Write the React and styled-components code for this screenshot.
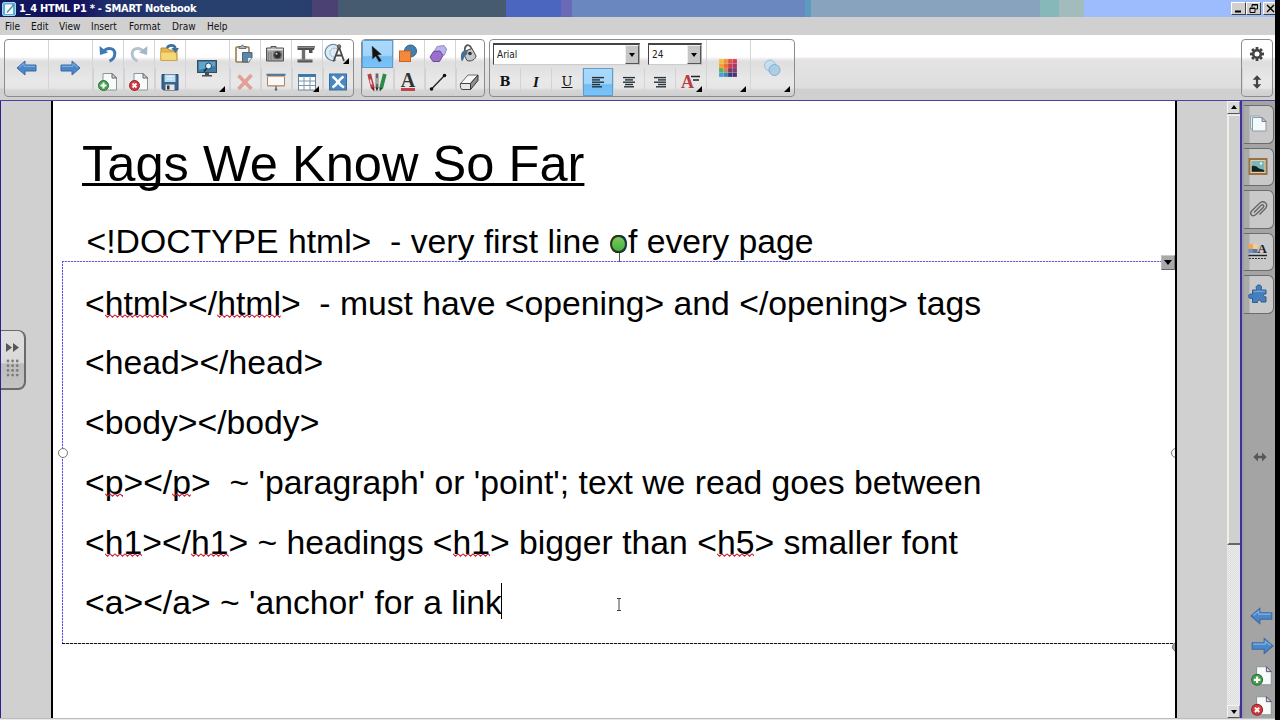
import React from "react";
import styled, { createGlobalStyle, css } from "styled-components";

const GlobalStyle = createGlobalStyle`
  * { box-sizing: border-box; }
  html, body { margin: 0; padding: 0; }
  body { width: 1280px; height: 720px; overflow: hidden; background: #000; }
`;

const uiFont = `"DejaVu Sans Condensed", "DejaVu Sans", "Noto Sans", sans-serif`;

/* ---------- window frame ---------- */
const Screen = styled.div`
  width: 1280px;
  height: 720px;
  padding-right: 5px;
  background: #000;
  overflow: hidden;
`;
const Window = styled.div`
  width: 1275px;
  height: 720px;
  display: flex;
  flex-direction: column;
  background: #d0d0d0;
  overflow: hidden;
`;
const TitleBar = styled.header`
  flex: none;
  height: 17px;
  display: flex;
  align-items: center;
  padding-left: 2px;
  background: linear-gradient(
    90deg,
    #141c62 0, #0f1158 50px, #141260 80px, #1f2c6a 105px, #27406e 200px, #283f6e 312px,
    #4b4172 312px, #4b4172 338px, #465a70 338px, #465a70 506px,
    #4a66be 506px, #4a66be 561px, #6c68b8 561px, #6c68b8 572px,
    #6a87bf 572px, #6a87bf 805px, #5d9ac0 805px, #5d9ac0 811px,
    #88a3be 811px, #88a3be 1040px, #86b7b9 1040px, #86b7b9 1059px,
    #a2bbbd 1059px, #a2bbbd 1084px, #9dbcfe 1084px
  );
`;
const Title = styled.div`
  flex: 1;
  margin-left: 3px;
  font: bold 11px/16px ${uiFont};
  font-stretch: condensed;
  letter-spacing: -0.3px;
  color: #fff;
  white-space: pre;
`;
const WinButtons = styled.div`
  display: flex;
  width: 44px;
  height: 13px;
  overflow: hidden;
`;
const WinButton = styled.div`
  flex: none;
  width: 15px;
  height: 13px;
  margin-left: ${(p) => p.$gap || 0}px;
  background: #d2d0cc;
  border: 1px solid;
  border-color: #fff #404040 #404040 #fff;
  svg { display: block; }
`;
const MenuBar = styled.nav`
  flex: none;
  height: 18px;
  display: flex;
  padding-left: 5px;
  background: #d0d0d0;
`;
const MenuItem = styled.span`
  width: ${(p) => p.$w}px;
  font: 10px/19px ${uiFont};
  font-stretch: condensed;
  color: #111;
  white-space: nowrap;
`;

/* ---------- toolbar ---------- */
const Toolbar = styled.section`
  flex: none;
  height: 65px;
  display: flex;
  align-items: flex-start;
  padding: 4px 2px 0 4px;
  background: linear-gradient(#fff 0 22px, #f3e6f2 23px, #e3e3e3 25px, #dedede 53px, #d0d0d0 54px);
`;
const Group = styled.div`
  display: flex;
  height: 58px;
  width: ${(p) => p.$w}px;
  margin-right: ${(p) => p.$mr || 0}px;
  margin-left: ${(p) => p.$ml || 0};
  border: 1px solid #8c8c8c;
  border-radius: 4px;
  overflow: hidden;
  background: linear-gradient(#fff 0 17px, #efeaf0 19px, #dedede 22px, #e8e8e8 40px, #e6e6e6 48px, #d6d6d6 50px, #cfcfcf);
`;
const Column = styled.div`
  display: flex;
  flex-direction: column;
  flex: ${(p) => (p.$w ? `0 0 ${p.$w}px` : "1 1 0")};
  border-left: 1px solid #d4d4d6;
  &:first-child { border-left: 0; }
`;
const Row = styled.div`
  display: flex;
  height: 28px;
`;
const Cell = styled.div`
  flex: 1;
  position: relative;
  display: flex;
  align-items: center;
  justify-content: center;
  padding-right: ${(p) => p.$pr ?? 3}px;
  padding-bottom: ${(p) => p.$pb ?? 0}px;
  & + & { border-top: ${(p) => (p.$row ? "0" : "1px solid #d2d2d4")}; border-left: ${(p) => (p.$row ? "1px solid #d2d2d4" : "0")}; }
  ${(p) => p.$active && css`
    background: linear-gradient(#a9dbfb, #a4d4f8 55%, #6fbcf5 60%, #7cc4f8);
    box-shadow: inset 0 0 0 1px #5a9fd0;
  `}
`;
const Corner = styled.i`
  position: absolute;
  right: ${(p) => p.$r ?? 3}px;
  bottom: ${(p) => p.$b ?? 4}px;
  border-left: 6px solid transparent;
  border-bottom: 6px solid #000;
`;
const Svg = styled.svg`
  display: block;
  flex: none;
  overflow: visible;
`;
const Letter = styled.span`
  font: ${(p) => p.$font};
  color: ${(p) => p.$color || "#111"};
  border-bottom: ${(p) => p.$bar || "0"};
  text-decoration: ${(p) => p.$deco || "none"};
`;
const FontArea = styled.div`
  width: 216px;
  display: flex;
  flex-direction: column;
`;
const Combos = styled.div`
  height: 28px;
  display: flex;
  gap: 8px;
  padding: 3px 0 0 3px;
`;
const Combo = styled.div`
  width: ${(p) => p.$w}px;
  height: 22px;
  display: flex;
  align-items: stretch;
  justify-content: space-between;
  padding-left: 3px;
  background: #fff;
  border: 1px solid;
  border-color: #444 #aaa #ccc #444;
  border-top-width: 2px;
  font: 10px/19px ${uiFont};
  font-stretch: condensed;
  color: #222;
`;
const ComboArrow = styled.div`
  width: 14px;
  display: flex;
  align-items: center;
  justify-content: center;
  background: #c6c6c6;
  border: 1px solid;
  border-color: #eee #555 #555 #eee;
`;
const Down = styled.i`
  border: 3px solid transparent;
  border-top: 4px solid #000;
  border-bottom: 0;
`;
const Up = styled.i`
  border: 3px solid transparent;
  border-bottom: 4px solid #000;
  border-top: 0;
`;

/* ---------- workspace ---------- */
const Workspace = styled.main`
  flex: none;
  height: 618px;
  display: flex;
  border-top: 1px solid #4a40a0;
`;
const BottomEdge = styled.div`
  flex: 1;
  background: #e9e9e9;
  border-top: 1px solid #bdbdbd;
`;
const LeftGutter = styled.aside`
  width: 51px;
  display: flex;
  align-items: flex-start;
  padding-top: 229px;
  background: #d0d0d0;
  border-left: 1px solid #2a2290;
`;
const Expander = styled.div`
  width: 25px;
  height: 60px;
  padding-right: 2px;
  display: flex;
  flex-direction: column;
  align-items: center;
  justify-content: center;
  border: 1px solid #6a6a6a;
  border-width: 1px 2px 2px 0;
  border-radius: 0 8px 8px 0;
  background: linear-gradient(#dedede, #d9d9d9 55%, #bdbdbd 58%, #c3c3c3);
`;
const Page = styled.article`
  position: relative;
  width: 1126px;
  overflow: hidden;
  background: #fff;
  border-left: 2px solid #000;
  border-right: 2px solid #000;
  font-family: "Liberation Sans", Arial, sans-serif;
  color: #000;
`;
const Heading = styled.h1`
  position: absolute;
  left: 29px;
  top: 34px;
  margin: 0;
  font-size: 50.6px;
  line-height: 58px;
  font-weight: 400;
  white-space: pre;
  text-decoration: underline;
  text-decoration-thickness: 3px;
  text-decoration-skip-ink: none;
  text-underline-offset: 2px;
`;
const FirstLine = styled.p`
  position: absolute;
  left: 33.5px;
  top: 121px;
  margin: 0;
  font-size: 33.72px;
  line-height: 38px;
  white-space: pre;
`;
const Selection = styled.div`
  position: absolute;
  left: 9px;
  top: 160px;
  width: 1130px;
  height: 383px;
  padding: 11px 0 0 23px;
  background:
    repeating-linear-gradient(90deg, #6460e0 0 2px, #d8d8fa 2px 3px) 0 0 / 100% 1px no-repeat,
    repeating-linear-gradient(90deg, #111 0 3px, #c8c8e8 3px 4px) 0 100% / 100% 1px no-repeat,
    repeating-linear-gradient(180deg, #5450ea 0 2px, #d8d8fa 2px 3px) 0 0 / 1px 100% no-repeat;
`;
const Line = styled.p`
  margin: 0;
  height: 60px;
  font-size: 33.72px;
  line-height: 60px;
  white-space: pre;
  &:first-child { height: 59px; padding-top: 1px; margin-bottom: 1px; }
`;
const Misspelt = styled.span`
  position: relative;
  svg { position: absolute; left: 0; bottom: 4px; width: 100%; height: 4px; }
`;
const Caret = styled.span`
  display: inline-block;
  width: 1px;
  height: 36px;
  margin-left: -1px;
  vertical-align: -5px;
  background: #000;
`;
const Handle = styled.i`
  position: absolute;
  left: ${(p) => p.$x}px;
  top: ${(p) => p.$y}px;
  width: 10px;
  height: 10px;
  border: 1px solid #777;
  border-radius: 50%;
  background: ${(p) => p.$fill || "#fff"};
`;
const Rotate = styled.i`
  position: absolute;
  left: 557px;
  top: 134px;
  width: 17px;
  height: 18px;
  border: 2px solid #28362a;
  border-radius: 50%;
  background: linear-gradient(#7cc95e, #45b23c);
  &::after {
    content: "";
    position: absolute;
    left: 7px;
    top: 16px;
    width: 1px;
    height: 9px;
    background: #555;
  }
`;
const MenuHandle = styled.div`
  position: absolute;
  right: 0;
  top: 154px;
  width: 14px;
  height: 15px;
  display: flex;
  align-items: center;
  justify-content: center;
  background: #a9a9a9;
  border: 1px solid;
  border-color: #ccc #777 #666 #bbb;
  i { border-width: 5px 4px 0; }
`;
const IBeam = styled(Svg)`
  position: absolute;
  left: 564px;
  top: 497px;
`;
const RightGutter = styled.div`
  width: 50px;
  background: #d0d0d0;
`;
const ScrollBar = styled.div`
  width: 13px;
  display: flex;
  flex-direction: column;
  background: repeating-conic-gradient(#dcdcdc 0 25%, #eeeeee 0 50%) 0 0 / 2px 2px;
`;
const ScrollButton = styled.div`
  height: 13px;
  display: flex;
  align-items: center;
  justify-content: center;
  background: #dadada;
  border: 1px solid;
  border-color: #f4f4f4 #999 #555 #f4f4f4;
`;
const Thumb = styled.div`
  height: 431px;
  margin: 1px 0 160px;
  background: #d0d0d0;
  border-left: 2px solid #f1efe8;
  border-top: 1px solid #f1efe8;
  border-bottom: 2px solid #666;
`;
const SidePanel = styled.aside`
  flex: 1;
  display: flex;
  flex-direction: column;
  background: linear-gradient(90deg, #9a98a8 0, #a4a4a4 3px);
  border-left: 2px solid #3c32a0;
`;
const SideTab = styled.div`
  flex: none;
  width: 30px;
  height: 38.5px;
  margin: 4px 0 0 2px;
  padding-right: 1px;
  display: flex;
  align-items: center;
  justify-content: center;
  border: 1px solid #6c6c6c;
  border-left: 0;
  border-radius: 0 6px 6px 0;
  background: linear-gradient(90deg, #aaaaaa 0 5px, #c9c9c9 6px);
`;
const Resize = styled.div`
  display: flex;
  justify-content: center;
  padding-left: 2px;
  margin-top: 136px;
`;
const PageNav = styled.div`
  margin-top: 140px;
  display: flex;
  flex-direction: column;
  gap: 6px;
  padding-left: 8px;
`;

/* ---------- drawings ---------- */
const Icon = ({ s = 22, vb, children, ...rest }) => (
  <Svg width={s} height={s} viewBox={vb || "0 0 22 22"} fill="none" {...rest}>{children}</Svg>
);
const arrowPath = "M1 11 L9 4 V8 H20 V14 H9 V18 Z";
const ArrowLeft = ({ s = 22 }) => (
  <Icon s={s}><path d={arrowPath} fill="#4a86c8" stroke="#3a6aa4" /><path d="M3 10.5 8 6.5 V9.3 H19" stroke="#85b4e2" /></Icon>
);
const ArrowRight = ({ s = 22 }) => (
  <Icon s={s}><path d={arrowPath} transform="matrix(-1 0 0 1 22 0)" fill="#4a86c8" stroke="#3a6aa4" /><path d="M3 9.3 H14 V6.5 L19 10.5" stroke="#85b4e2" /></Icon>
);
const Undo = () => (
  <Icon><path d="M6.5 8.5 C10.5 3.5 18 5 17.8 11 C17.6 14.5 15.5 17 12.5 18" stroke="#3f78b4" strokeWidth="3" /><path d="M2.5 3 L3 12 L11 9.5 Z" fill="#3f78b4" /></Icon>
);
const Redo = () => (
  <Icon><path d="M15.5 8.5 C11.5 3.5 4 5 4.2 11 C4.4 14.5 6.5 17 9.5 18" stroke="#b4c3d0" strokeWidth="3" /><path d="M19.5 3 L19 12 L11 9.5 Z" fill="#a5b7c6" /></Icon>
);
const Sheet = () => (
  <g>
    <path d="M6 2.5 H15 L19.5 7 V19 H6 Z" fill="#f6fafb" stroke="#8c9698" />
    <path d="M15 2.5 V7 H19.5 Z" fill="#d6dcde" stroke="#556" strokeWidth=".9" />
  </g>
);
const AddPage = ({ s = 22 }) => (
  <Icon s={s}><Sheet /><circle cx="6.5" cy="14.5" r="5" fill="#46a050" stroke="#2b7436" /><path d="M3.5 14.5 H9.5 M6.5 11.5 V17.5" stroke="#fff" strokeWidth="2" /></Icon>
);
const DeletePage = ({ s = 22 }) => (
  <Icon s={s}><Sheet /><circle cx="6.5" cy="14.5" r="5" fill="#d23c40" stroke="#9c2428" /><path d="M4.5 12.5 L8.5 16.5 M8.5 12.5 L4.5 16.5" stroke="#fff" strokeWidth="1.8" /></Icon>
);
const OpenFile = () => (
  <Icon><path d="M3 5 H9 L11 7 H19 V17.5 H3 Z" fill="#e4b84a" stroke="#b68d3a" /><path d="M2.5 9 H18 L19 17.5 H3 Z" fill="#f7d774" stroke="#c89f45" strokeWidth=".8" /><path d="M9 5 C11 1.5 16 1.5 17.5 5" stroke="#3f6f9e" strokeWidth="2.6" /><path d="M13.5 5 H21 L17.5 10 Z" fill="#3f6f9e" /></Icon>
);
const Save = () => (
  <Icon><path d="M3 3.5 H19 V19 H4.5 L3 17.5 Z" fill="#36658e" stroke="#28486c" /><rect x="5.5" y="3.5" width="11" height="7.5" fill="#b9dcf0" /><path d="M7.5 5.5H14.5M7.5 8H14.5" stroke="#e9f6fd" /><rect x="6.5" y="13.5" width="9" height="5.5" fill="#e6e6e6" /><rect x="8" y="14.5" width="2.5" height="4" fill="#333" /></Icon>
);
const Monitor = () => (
  <Icon><rect x="1.5" y="3.5" width="19" height="12" fill="#3c7ca6" stroke="#3a4c58" /><path d="M3 5 H19 V9 L3 13Z" fill="#5fa5cc" /><circle cx="12.5" cy="9" r="3" fill="#e2f1f8" stroke="#21455c" /><path d="M10.5 11.5 L8 14.5" stroke="#16303f" strokeWidth="1.8" /><path d="M9 16 H13 V18 H16 V19.5 H6 V18 H9Z" fill="#454d52" /></Icon>
);
const Paste = () => (
  <Icon><rect x="3" y="4" width="13" height="15" rx="1" fill="#fafafa" stroke="#9c7c4c" strokeWidth="1.6" /><path d="M6 5.5 V3.5 H8 L9.5 1.8 L11 3.5 H13 V5.5 Z" fill="#aeb4b8" stroke="#555" strokeWidth=".8" /><path d="M9.5 9.5 H19 V15 L15.5 19 H9.5 Z" fill="#5c87a8" stroke="#4a6478" /><path d="M15 19 V15 H19Z" fill="#d9e9f2" /></Icon>
);
const Camera = () => (
  <Icon><path d="M2.5 5 H7 V3.5 H12 V5 H19.5 V18 H2.5 Z" fill="#a6a6a6" stroke="#505050" /><path d="M3.5 6.5H19" stroke="#e4e4e4" strokeWidth="1.4" /><path d="M4.5 9 V17 M7 9V17" stroke="#858585" strokeWidth="1.2" /><rect x="9" y="8" width="9" height="8" fill="#8a8a8a" /><circle cx="13.5" cy="12" r="3.8" fill="#2c2c2c" stroke="#666" /><circle cx="12.5" cy="10.8" r="1" fill="#d0d0d0" /></Icon>
);
const DocCamera = () => (
  <Icon><path d="M2.5 3 H20 L19 7 H17.5 V10 H14 V7 H2.5 Z" fill="#4f4f4f" /><path d="M3 4.2H19" stroke="#a5a5a5" /><path d="M8.5 7 V17" stroke="#6d6d6d" strokeWidth="3.4" /><path d="M2.5 16.5 H17.5 V19.5 H2.5 Z" fill="#575757" /><path d="M3 17H17" stroke="#999" strokeWidth=".8" /></Icon>
);
const Measure = () => (
  <Icon><path d="M11 2.5 A8 8 0 1 0 10 17" fill="#dcebf4" stroke="#6a8da4" strokeWidth="1.3" /><path d="M11 6 A4.5 4.5 0 1 0 9.5 14" stroke="#7d9caf" strokeDasharray="1.5 1" /><path d="M13 4 L7.5 18.5 M13 4 L18 18 M9.5 12.5 H16" stroke="#4a4a4a" strokeWidth="1.8" /><circle cx="13" cy="3.5" r="1.8" fill="#777" stroke="#333" strokeWidth=".7" /></Icon>
);
const Delete = () => (
  <Icon><path d="M4.5 4.5 L17.5 18 M17.5 4 L4.5 18" stroke="#e3a096" strokeWidth="3.6" /></Icon>
);
const ScreenShade = () => (
  <Icon><rect x="2.5" y="4.5" width="17" height="10.5" fill="#f8f8f8" stroke="#9a8878" /><path d="M1.5 3.8H20.5" stroke="#4f7896" strokeWidth="2" /><path d="M2 5.5H20" stroke="#e2a880" /><path d="M2 14.5H20" stroke="#d09a72" /><path d="M11 15 V18" stroke="#666" strokeWidth="1.3" /><circle cx="11" cy="18.5" r="1.3" fill="#666" /></Icon>
);
const TableIcon = () => (
  <Icon><rect x="2.5" y="3.5" width="17" height="15.5" fill="#fff" stroke="#688598" /><path d="M2 4.5H20" stroke="#3c79a8" strokeWidth="3" /><path d="M8 5V19M14 5V19M3 10H19M3 14.5H19" stroke="#7c98aa" /></Icon>
);
const Addon = () => (
  <Icon><rect x="2.5" y="3" width="17" height="16" fill="#4a88c4" stroke="#3a6c9e" /><path d="M5.5 5.5 Q9 8 11 11 Q13 14 17 16.5 M16.5 5.5 Q13 8 11 11 Q9 14 5.5 16.5" stroke="#fff" strokeWidth="2.6" /></Icon>
);
const Pointer = () => (
  <Icon><path d="M6 3 L15.5 11.5 L11.6 12 L15.5 17.5 L13 19 L9.8 13.2 L6.5 16 Z" fill="#111" stroke="#555" strokeWidth=".5" /></Icon>
);
const Shapes = () => (
  <Icon><circle cx="13.5" cy="8" r="6" fill="#4380b0" stroke="#2f6088" /><rect x="2.5" y="8" width="11" height="10.5" fill="#f5893a" stroke="#c86222" /></Icon>
);
const Polygons = () => (
  <Icon><path d="M9 3.5 L16 2.5 L18.5 6 L16.5 12 L9 12 L6.5 8 Z" fill="#b9b4ea" stroke="#8f8cc4" /><path d="M5.5 8.5 L12 8 L15 12.5 L11.5 18.5 L5 18.5 L2 14 Z" fill="#9a70cc" stroke="#6a4c9c" /></Icon>
);
const Fill = () => (
  <Icon><path d="M7 9 C6 3 9 1.5 11 2.5 C13.5 3.5 14 7 13 10" stroke="#555" strokeWidth="1.8" /><path d="M8.5 7.5 L14 5.5 L18 13 C17.5 16.5 13 19 9 17.5 L6 12 Z" fill="#c4c8ca" stroke="#444" /><path d="M10 7 C7 6.5 4 8 3.2 11 C2.4 14 3 17 4 18.5 C6 17 5.5 13 9 11.5 Z" fill="#4a6f90" /><circle cx="12" cy="10.5" r="1.8" fill="#333" /></Icon>
);
const Pens = () => (
  <Icon><path d="M3.2 3 L6.8 17" stroke="#b8404a" strokeWidth="3.8" /><path d="M5 16.8 L8.4 16.3 L8.2 20.5Z" fill="#6b1a20" /><path d="M4.2 8.5 l1.4 5" stroke="#f0d8d8" strokeWidth="1.5" /><path d="M11 2.5 V17" stroke="#666" strokeWidth="2.8" /><path d="M9.6 16.5 H12.4 L11 20.5Z" fill="#222" /><path d="M11 7v6" stroke="#ddd" /><path d="M18.8 3 L15.2 17" stroke="#2f8a48" strokeWidth="3.8" /><path d="M13.4 16.3 L16.8 17 L13.8 20.5Z" fill="#164c24" /></Icon>
);
const LineTool = () => (
  <Icon><path d="M3.5 18 L16.5 4.5" stroke="#222" strokeWidth="1.3" /><circle cx="3.5" cy="18" r="1.8" fill="#111" /><circle cx="16.5" cy="4.5" r="1.8" fill="#111" /></Icon>
);
const Eraser = () => (
  <Icon><path d="M2.5 12.5 L10 4 H20 L12.5 12.5 Z" fill="#f6f6f6" stroke="#6a6a6a" /><path d="M2.5 12.5 H12.5 V18.5 H4 C2.5 18 2 15 2.5 12.5 Z" fill="#e6e6e6" stroke="#444" /><path d="M12.5 12.5 L20 4 V9.5 L12.5 18.5 Z" fill="#8f8f8f" stroke="#333" /></Icon>
);
const Align = ({ rows }) => (
  <Icon s={14} vb="0 0 14 14">{rows.map(([x, w], i) => <rect key={i} x={x} y={1.9 + i * 2.3} width={w} height="1.4" fill="#26323a" />)}</Icon>
);
const Palette = () => {
  const c = ["#f2c22e", "#f09433", "#e2504c", "#d93c50", "#f3a02f", "#ef6a35", "#d23a4f", "#a83863", "#5cb254", "#c98a4a", "#7a3a62", "#7b3c78", "#42a3d4", "#3c87c0", "#3a3c70", "#4c3470"];
  return <Icon s={18} vb="0 0 18 18">{c.map((f, i) => <rect key={i} x={(i % 4) * 4.5 + 0.1} y={Math.floor(i / 4) * 4.5 + 0.1} width="4.3" height="4.3" fill={f} />)}</Icon>;
};
const Transparency = () => (
  <Icon s={20} vb="0 0 20 20"><circle cx="8" cy="7.5" r="5.5" fill="#c6dff0" stroke="#9cbdd4" /><circle cx="12.5" cy="12" r="5.5" fill="#a3cbe6" fillOpacity=".85" stroke="#86aeca" /></Icon>
);
const Gear = () => (
  <Icon s={16} vb="0 0 16 16">
    {[0, 45, 90, 135, 180, 225, 270, 315].map((a) => <rect key={a} x="6.6" y="1" width="2.8" height="4" fill="#444" transform={`rotate(${a} 8 8)`} />)}
    <circle cx="8" cy="8" r="3.8" stroke="#444" strokeWidth="2.6" />
  </Icon>
);
const UpDown = () => (
  <Icon s={14} vb="0 0 14 14"><path d="M7 3 V11" stroke="#444" strokeWidth="2.2" /><path d="M7 .3 L11.3 4.8 H2.7Z M7 13.7 L11.3 9.2 H2.7Z" fill="#444" /></Icon>
);
const LeftRight = () => (
  <Icon s={14} vb="0 0 14 14"><path d="M3 7 H11" stroke="#585858" strokeWidth="2.4" /><path d="M.3 7 L5 2.5 V11.5Z M13.7 7 L9 2.5 V11.5Z" fill="#585858" /></Icon>
);
const AppIcon = () => (
  <Icon s={14} vb="0 0 14 14"><rect x=".5" y=".5" width="13" height="13" rx="1.5" fill="#5aaee0" stroke="#a9d4ee" /><path d="M3 2.5H9.5L11 4V12H3Z" fill="#f1f8fc" /><path d="M5 10.5 L12 2.5" stroke="#6b8391" strokeWidth="1.4" /></Icon>
);
const Pages = () => (
  <Icon><path d="M3.5 3 H12 L14.5 5.5 V16 H3.5Z" fill="#dbeef5" stroke="#8fa9b2" /><path d="M5.5 4.5 H15 L19 8.5 V18 H5.5Z" fill="#f3fafc" stroke="#8c9da2" /><path d="M15 4.5 V8.5 H19Z" fill="#c8d4d8" stroke="#667" strokeWidth=".8" /></Icon>
);
const Gallery = () => (
  <Icon><rect x="2.5" y="3" width="17" height="15" fill="#79b5ba" stroke="#9c6f44" strokeWidth="2" /><rect x="4" y="4.5" width="14" height="12" stroke="#e6cfa4" /><path d="M4.8 10 Q9 9 12 12.5 L17.2 14 V15.8 H4.8Z" fill="#16201c" /><circle cx="14" cy="7.5" r="1.2" fill="#f8f2c8" /></Icon>
);
const Clip = () => (
  <Icon><path d="M7 14.5 L14 7.5 C16 5.8 17.8 7.8 16.2 9.6 L8.8 16.6 C5.5 19.6 1.8 16 4.8 12.8 L12.6 5.2 C16.6 1.6 22 6 18.4 10.6 L12.5 16.4" stroke="#666" strokeWidth="1.4" /></Icon>
);
const Puzzle = () => (
  <Icon><path d="M5.5 7 H10 C8 3.5 10 2 12 2 C14.2 2 15.5 3.8 13.8 7 H19 V11 C16 10 15.5 14.5 19 13.8 V19 H14 C14.5 16.5 10 16.5 10.5 19.5 H5.5 V15 C2.5 16.5 1.5 14.5 1.6 13 C1.8 10.8 4 10.5 5.5 11.5Z" fill="#477fbe" stroke="#2f5c92" /><path d="M6.5 8.3H18" stroke="#7fb0e0" /></Icon>
);
const Properties = () => (
  <Icon>
    <rect x="1.5" y="3" width="4.5" height="5" fill="#f4a25c" /><rect x="6" y="3" width="4.5" height="5" fill="#f3cf8a" />
    <rect x="1.5" y="8" width="4.5" height="4" fill="#6f8fc4" /><rect x="6" y="8" width="4.5" height="4" fill="#5776a4" />
    <text x="10.5" y="12" fontFamily="Liberation Serif" fontWeight="bold" fontSize="13" fill="#222">A</text>
    <path d="M1.5 14.5H20" stroke="#222" strokeWidth="1.4" /><path d="M2 17.5H20" stroke="#333" strokeDasharray="2 1" />
  </Icon>
);
const ExpandMark = styled(Svg)`
  width: 16px;
  height: 40px;
`;
const Expand = () => (
  <ExpandMark viewBox="0 0 16 40" fill="none">
    <path d="M2 3 L8 7.5 L2 12Z M9 3 L15 7.5 L9 12Z" fill="#585858" />
    {[0, 1, 2, 3].map((r) => [0, 1, 2].map((c) => <circle key={`${r}${c}`} cx={4 + c * 4.6} cy={21 + r * 4.7} r="1.4" fill="#7c7c7c" />))}
  </ExpandMark>
);

const Wrong = ({ children }) => (
  <Misspelt>
    {children}
    <svg>
      <defs>
        <pattern id="wave" width="5" height="4" patternUnits="userSpaceOnUse">
          <path d="M0 .8 L2.5 3.2 L5 .8" fill="none" stroke="#c81e34" strokeWidth="1.1" />
        </pattern>
      </defs>
      <rect width="100%" height="4" fill="url(#wave)" />
    </svg>
  </Misspelt>
);

const Pair = ({ top, bottom, w, pr, topActive, topCorner, bottomCorner }) => (
  <Column $w={w}>
    <Cell $pr={pr} $active={topActive}>{top}{topCorner && <Corner $r={4} />}</Cell>
    <Cell $pr={pr}>{bottom}{bottomCorner && <Corner $r={3} />}</Cell>
  </Column>
);

const menus = [["File", 26], ["Edit", 28], ["View", 32], ["Insert", 38], ["Format", 43], ["Draw", 35], ["Help", 30]];

export default function App() {
  return (
    <Screen>
      <GlobalStyle />
      <Window>
        <TitleBar>
          <AppIcon />
          <Title>1_4 HTML P1 * - SMART Notebook</Title>
          <WinButtons>
            <WinButton><svg width="13" height="11"><path d="M3 8.5H9" stroke="#000" strokeWidth="2" /></svg></WinButton>
            <WinButton><svg width="13" height="11"><path d="M5 4V1.5H10.5V6H8.5M5 2H10.5M3 5H8V9.5H3ZM3 5.5H8" stroke="#000" fill="none" /></svg></WinButton>
            <WinButton $gap={2}><svg width="13" height="11"><path d="M3 2L10 9M10 2L3 9" stroke="#000" strokeWidth="1.4" /></svg></WinButton>
          </WinButtons>
        </TitleBar>
        <MenuBar>{menus.map(([t, w]) => <MenuItem key={t} $w={w}>{t}</MenuItem>)}</MenuBar>

        <Toolbar>
          <Group $w={350} $mr={7}>
            <Column $w={43}><Cell $pr={0}><ArrowLeft /></Cell></Column>
            <Column $w={44}><Cell $pr={1}><ArrowRight /></Cell></Column>
            <Pair w={31} pr={1} top={<Undo />} bottom={<AddPage />} />
            <Pair w={31} pr={1} top={<Redo />} bottom={<DeletePage />} />
            <Pair w={31} pr={2} top={<OpenFile />} bottom={<Save />} />
            <Column $w={44}><Cell $pr={2}><Monitor /><Corner $r={4} /></Cell></Column>
            <Pair w={31} pr={2} top={<Paste />} bottom={<Delete />} />
            <Pair w={31} pr={2} top={<Camera />} bottom={<ScreenShade />} />
            <Pair w={31} pr={2} top={<DocCamera />} bottom={<TableIcon />} bottomCorner />
            <Pair pr={2} top={<Measure />} bottom={<Addon />} topCorner />
          </Group>
          <Group $w={124} $mr={4}>
            <Pair w={31} pr={2} top={<Pointer />} bottom={<Pens />} topActive />
            <Pair w={31} top={<Shapes />} bottom={<Letter $font={`bold 20px/15px "Liberation Serif", serif`} $color="#333" $bar="3px solid #c0444c">A</Letter>} />
            <Pair w={31} top={<Polygons />} bottom={<LineTool />} />
            <Pair top={<Fill />} bottom={<Eraser />} />
          </Group>
          <Group $w={306}>
            <FontArea>
              <Combos>
                <Combo $w={147}>Arial<ComboArrow><Down /></ComboArrow></Combo>
                <Combo $w={54}>24<ComboArrow><Down /></ComboArrow></Combo>
              </Combos>
              <Row>
                <Cell $row $pr={0}><Letter $font={`bold 13px/14px "DejaVu Serif", serif`}>B</Letter></Cell>
                <Cell $row $pr={0}><Letter $font={`italic bold 15px/14px "Liberation Serif", serif`}>I</Letter></Cell>
                <Cell $row $pr={0} $pb={1}><Letter $font={`13px/14px "DejaVu Serif", serif`} $deco="underline">U</Letter></Cell>
                <Cell $row $active $pr={0}><Align rows={[[1, 12], [1, 8], [1, 12], [1, 8], [1, 10]]} /></Cell>
                <Cell $row $pr={0}><Align rows={[[1, 12], [3, 8], [1, 12], [3, 8], [2, 10]]} /></Cell>
                <Cell $row $pr={0}><Align rows={[[1, 12], [5, 8], [1, 12], [5, 8], [3, 10]]} /></Cell>
                <Cell $row $pr={0}>
                  <Letter $font={`bold 18px/18px "Liberation Serif", serif`} $color="#b83c40">A</Letter>
                  <Svg width="7" height="14"><path d="M-3 1.5H6M-1 5H5" stroke="#222" strokeWidth="1.5" /></Svg>
                  <Corner $r={4} />
                </Cell>
              </Row>
            </FontArea>
            <Column $w={44}><Cell $pr={1}><Palette /><Corner $r={4} /></Cell></Column>
            <Column><Cell $pr={2}><Transparency /><Corner $r={4} /></Cell></Column>
          </Group>
          <Group $w={32} $ml="auto"><Pair pr={1} top={<Gear />} bottom={<UpDown />} /></Group>
        </Toolbar>

        <Workspace>
          <LeftGutter><Expander><Expand /></Expander></LeftGutter>
          <Page>
            <Heading>Tags We Know So Far</Heading>
            <FirstLine>{"<!DOCTYPE html>  - very first line of every page"}</FirstLine>
            <Selection>
              <Line>{"<"}<Wrong>html</Wrong>{"></"}<Wrong>html</Wrong>{">  - must have <opening> and </opening> tags"}</Line>
              <Line>{"<head></head>"}</Line>
              <Line>{"<body></body>"}</Line>
              <Line>{"<"}<Wrong>p</Wrong>{"></"}<Wrong>p</Wrong>{">  ~ 'paragraph' or 'point'; text we read goes between"}</Line>
              <Line>{"<"}<Wrong>h1</Wrong>{"></"}<Wrong>h1</Wrong>{"> ~ headings <"}<Wrong>h1</Wrong>{"> bigger than <"}<Wrong>h5</Wrong>{"> smaller font"}</Line>
              <Line>{"<a></a> ~ 'anchor' for a link"}<Caret /></Line>
            </Selection>
            <Rotate />
            <Handle $x={5} $y={347} />
            <Handle $x={1118} $y={347} />
            <Handle $x={1119} $y={541} $fill="#aaa" />
            <MenuHandle><Down /></MenuHandle>
            <IBeam width="4" height="13"><path d="M0 .5H4M2 1V12M0 12.5H4" stroke="#444" /></IBeam>
          </Page>
          <RightGutter />
          <ScrollBar>
            <ScrollButton><Up /></ScrollButton>
            <Thumb />
            <ScrollButton><Down /></ScrollButton>
          </ScrollBar>
          <SidePanel>
            <SideTab><Pages /></SideTab>
            <SideTab><Gallery /></SideTab>
            <SideTab><Clip /></SideTab>
            <SideTab><Properties /></SideTab>
            <SideTab><Puzzle /></SideTab>
            <Resize><LeftRight /></Resize>
            <PageNav>
              <ArrowLeft s={24} />
              <ArrowRight s={24} />
              <AddPage s={24} />
              <DeletePage s={24} />
            </PageNav>
          </SidePanel>
        </Workspace>
        <BottomEdge />
      </Window>
    </Screen>
  );
}
